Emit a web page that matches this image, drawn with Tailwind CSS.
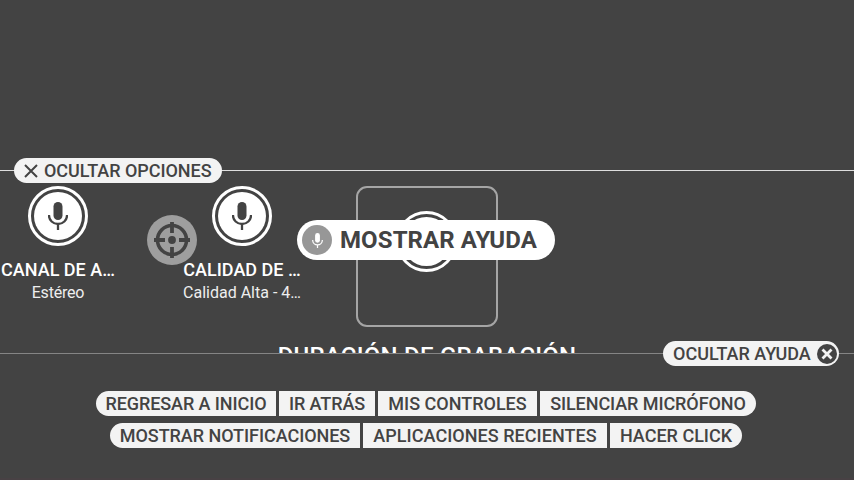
<!DOCTYPE html>
<html lang="es">
<head>
<meta charset="utf-8">
<title>Opciones de grabación</title>
<script src="https://cdn.jsdelivr.net/npm/@tailwindcss/browser@4"></script>
</head>
<body class="bg-[#434343] overflow-hidden">
<svg class="hidden">
  <symbol id="mic" viewBox="0 0 20 28">
    <rect x="5.500" y="0" width="9" height="18" rx="4.500" fill="currentColor"/>
    <path d="M1 13v0.500a9 8.500 0 0 0 18 0V13M10 22v6" fill="none" stroke="currentColor" stroke-width="2.300"/>
  </symbol>
</svg>
<main class="relative w-[854px] h-[480px] flex flex-col overflow-hidden border-b-2 border-[#484144] font-['Roboto',sans-serif] text-[#434343]">
  <div class="h-[170px] shrink-0"></div>

  <section class="relative h-[183px] shrink-0 border-t border-[#dedede]">
    <div class="h-[182px] overflow-hidden">
      <div class="flex -ml-[34px] pt-[15px] text-white text-center">
        <div class="w-[184px] shrink-0 flex flex-col items-center">
          <div class="size-[60px] rounded-full border-[3.5px] border-white p-[3px]">
            <div class="size-full rounded-full bg-white text-[#434343] flex items-center justify-center"><svg class="w-5 h-7"><use href="#mic"/></svg></div>
          </div>
          <div class="mt-[13px] text-[18px] leading-[22px] font-medium whitespace-nowrap">CANAL DE A…</div>
          <div class="mt-[1px] text-[16px] leading-[22px] text-[#eeeeee] tracking-[-0.2px] whitespace-nowrap">Estéreo</div>
        </div>
        <div class="w-[184px] shrink-0 flex flex-col items-center">
          <div class="size-[60px] rounded-full border-[3.5px] border-white p-[3px]">
            <div class="size-full rounded-full bg-white text-[#434343] flex items-center justify-center"><svg class="w-5 h-7"><use href="#mic"/></svg></div>
          </div>
          <div class="mt-[13px] text-[18px] leading-[22px] font-medium whitespace-nowrap">CALIDAD DE …</div>
          <div class="mt-[1px] text-[16px] leading-[22px] text-[#eeeeee] whitespace-nowrap">Calidad Alta - 4…</div>
        </div>
        <div class="w-[186px] shrink-0 flex flex-col items-center">
          <div class="w-[142px] h-[141px] rounded-[11px] border-2 border-[#a5a5a5] pt-[23px] pr-[1px] flex justify-center">
            <div class="size-[61px] rounded-full border-[3.5px] border-white p-[3px]"><div class="size-full rounded-full bg-white"></div></div>
          </div>
          <div class="mt-[15px] text-[24px] leading-[28px] font-medium tracking-[0.24px] whitespace-nowrap">DURACIÓN DE GRABACIÓN</div>
        </div>
      </div>
    </div>
    <button class="absolute left-[14px] -top-[13px] w-[208px] h-[25px] rounded-full bg-[#f3f3f3] flex items-center pl-[10px] gap-[6px] text-[18px] leading-[25px] font-medium tracking-[-0.05px] whitespace-nowrap">
      <svg class="size-[14px]" viewBox="0 0 14 14"><path d="M1 1l12 12M13 1L1 13" stroke="currentColor" stroke-width="2"/></svg>OCULTAR OPCIONES
    </button>
  </section>

  <section class="relative grow border-t border-[#858585] pt-[37px] flex flex-col items-center gap-[7px] text-[18px] leading-[25px] font-medium whitespace-nowrap">
    <div class="flex gap-[3px] -ml-[2px] tracking-[-0.08px]">
      <button class="w-[180px] h-[25px] bg-[#f3f3f3] rounded-l-full">REGRESAR A INICIO</button>
      <button class="w-[96px] h-[25px] bg-[#f3f3f3]">IR ATRÁS</button>
      <button class="w-[159px] h-[25px] bg-[#f3f3f3] tracking-normal">MIS CONTROLES</button>
      <button class="w-[216px] h-[25px] bg-[#f3f3f3] rounded-r-full">SILENCIAR MICRÓFONO</button>
    </div>
    <div class="flex gap-[3px] -ml-[2px]">
      <button class="w-[250px] h-[25px] bg-[#f3f3f3] rounded-l-full tracking-[-0.05px]">MOSTRAR NOTIFICACIONES</button>
      <button class="w-[244px] h-[25px] bg-[#f3f3f3] tracking-[0.04px]">APLICACIONES RECIENTES</button>
      <button class="w-[132px] h-[25px] bg-[#f3f3f3] rounded-r-full">HACER CLICK</button>
    </div>
    <button class="absolute left-[663px] -top-[13px] w-[176px] h-[25px] rounded-full bg-[#f3f3f3] flex items-center pl-[10px] gap-[6px]">OCULTAR AYUDA
      <svg class="size-[20px] shrink-0" viewBox="0 0 20 20"><circle cx="10" cy="10" r="10" fill="#434343"/><path d="M5.500 5.500l9 9M14.500 5.500l-9 9" stroke="#f3f3f3" stroke-width="2.800"/></svg>
    </button>
  </section>

  <div class="absolute left-[147px] top-[215px] size-[50px] rounded-full bg-[#9e9e9e] flex items-center justify-center">
    <svg class="size-[36px]" viewBox="0 0 36 36"><circle cx="18" cy="18" r="14.500" fill="none" stroke="#434343" stroke-width="3.600"/><path d="M18 0v11M18 25v11M0 18h11M25 18h11" stroke="#434343" stroke-width="3.800"/><circle cx="18" cy="18" r="3.900" fill="#434343"/></svg>
  </div>

  <button class="absolute left-[297px] top-[220px] w-[258px] h-[40px] rounded-full bg-white flex items-center pl-[5px] gap-[8px] text-[24px] leading-[40px] font-bold tracking-[0.1px] whitespace-nowrap">
    <span class="size-[30px] rounded-full bg-[#979797] text-white flex items-center justify-center"><svg class="w-[11px] h-[15px]"><use href="#mic"/></svg></span>MOSTRAR AYUDA
  </button>
</main>
</body>
</html>
